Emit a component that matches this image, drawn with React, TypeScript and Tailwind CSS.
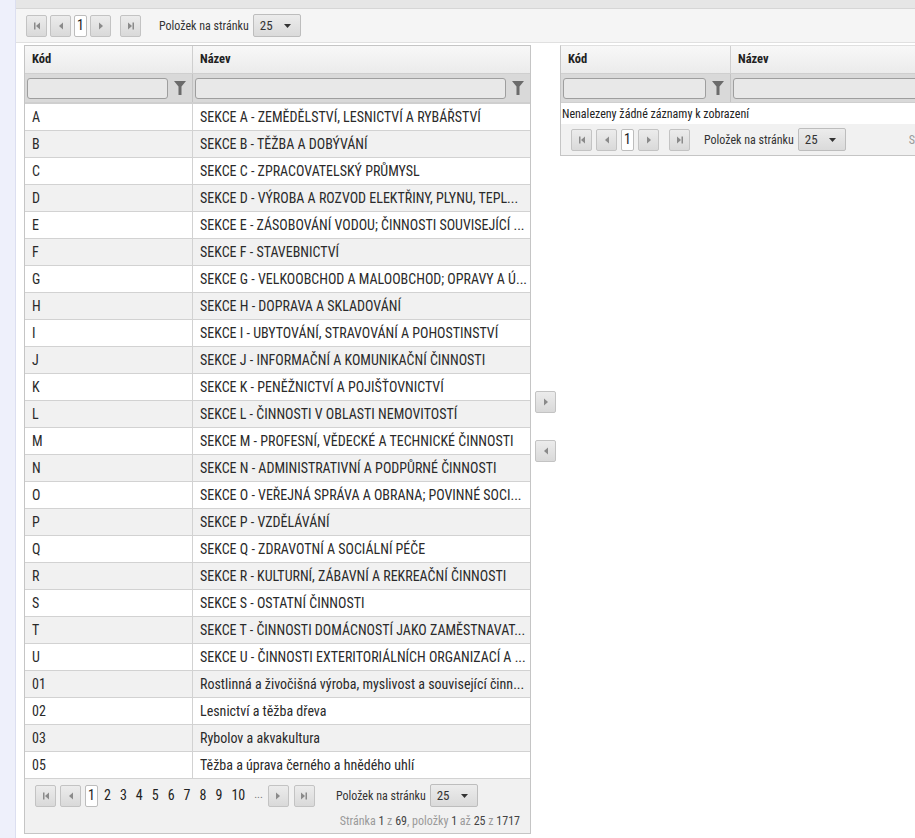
import React from 'react';

const rows: [string, string][] = [
  ['A', 'SEKCE A - ZEMĚDĚLSTVÍ, LESNICTVÍ A RYBÁŘSTVÍ'],
  ['B', 'SEKCE B - TĚŽBA A DOBÝVÁNÍ'],
  ['C', 'SEKCE C - ZPRACOVATELSKÝ PRŮMYSL'],
  ['D', 'SEKCE D - VÝROBA A ROZVOD ELEKTŘINY, PLYNU, TEPL...'],
  ['E', 'SEKCE E - ZÁSOBOVÁNÍ VODOU; ČINNOSTI SOUVISEJÍCÍ ...'],
  ['F', 'SEKCE F - STAVEBNICTVÍ'],
  ['G', 'SEKCE G - VELKOOBCHOD A MALOOBCHOD; OPRAVY A Ú...'],
  ['H', 'SEKCE H - DOPRAVA A SKLADOVÁNÍ'],
  ['I', 'SEKCE I - UBYTOVÁNÍ, STRAVOVÁNÍ A POHOSTINSTVÍ'],
  ['J', 'SEKCE J - INFORMAČNÍ A KOMUNIKAČNÍ ČINNOSTI'],
  ['K', 'SEKCE K - PENĚŽNICTVÍ A POJIŠŤOVNICTVÍ'],
  ['L', 'SEKCE L - ČINNOSTI V OBLASTI NEMOVITOSTÍ'],
  ['M', 'SEKCE M - PROFESNÍ, VĚDECKÉ A TECHNICKÉ ČINNOSTI'],
  ['N', 'SEKCE N - ADMINISTRATIVNÍ A PODPŮRNÉ ČINNOSTI'],
  ['O', 'SEKCE O - VEŘEJNÁ SPRÁVA A OBRANA; POVINNÉ SOCI...'],
  ['P', 'SEKCE P - VZDĚLÁVÁNÍ'],
  ['Q', 'SEKCE Q - ZDRAVOTNÍ A SOCIÁLNÍ PÉČE'],
  ['R', 'SEKCE R - KULTURNÍ, ZÁBAVNÍ A REKREAČNÍ ČINNOSTI'],
  ['S', 'SEKCE S - OSTATNÍ ČINNOSTI'],
  ['T', 'SEKCE T - ČINNOSTI DOMÁCNOSTÍ JAKO ZAMĚSTNAVAT...'],
  ['U', 'SEKCE U - ČINNOSTI EXTERITORIÁLNÍCH ORGANIZACÍ A ...'],
  ['01', 'Rostlinná a živočišná výroba, myslivost a související činn...'],
  ['02', 'Lesnictví a těžba dřeva'],
  ['03', 'Rybolov a akvakultura'],
  ['05', 'Těžba a úprava černého a hnědého uhlí'],
];

const font = { fontFamily: '"Roboto Condensed", "DejaVu Sans Condensed", "Liberation Sans", sans-serif' };

type IconKind = 'first' | 'prev' | 'next' | 'last';

// small triangle glyphs used in the pager buttons
const PagerIcon = ({ kind }: { kind: IconKind }) => (
  <svg width="10" height="10" viewBox="0 0 10 10" className="fill-[#8a8a8a]">
    {kind === 'first' && (
      <>
        <rect x="2" y="1.5" width="1.5" height="7" />
        <path d="M8 1.5 L4 5 L8 8.5 Z" />
      </>
    )}
    {kind === 'prev' && <path d="M7 1.5 L3 5 L7 8.5 Z" />}
    {kind === 'next' && <path d="M3 1.5 L7 5 L3 8.5 Z" />}
    {kind === 'last' && (
      <>
        <path d="M2 1.5 L6 5 L2 8.5 Z" />
        <rect x="6.5" y="1.5" width="1.5" height="7" />
      </>
    )}
  </svg>
);

const PagerButton = ({ kind }: { kind: IconKind }) => (
  <div className="w-[21px] h-[22px] shrink-0 flex items-center justify-center rounded-[2px] border border-[#c3c3c3] bg-gradient-to-b from-[#ececec] to-[#d9d9d9]">
    <PagerIcon kind={kind} />
  </div>
);

const CurrentPage = () => (
  <div className="w-[13px] h-[22px] shrink-0 flex items-center justify-center rounded-[2px] border border-[#bdbdbd] bg-white text-[14px] text-[#222]">
    1
  </div>
);

const PageSize = () => (
  <div className="flex items-center gap-[4px] whitespace-nowrap">
    <span className="text-[12px] text-[#333]">Položek na stránku</span>
    <div className="w-[48px] h-[23px] flex items-center justify-between pl-[6px] pr-[9px] rounded-[2px] border border-[#bdbdbd] bg-gradient-to-b from-[#ececec] to-[#dadada] text-[13px] text-[#333]">
      25
      <svg width="7" height="4" viewBox="0 0 7 4" className="fill-[#333]">
        <path d="M0 0 H7 L3.5 4 Z" />
      </svg>
    </div>
  </div>
);

const FilterCell = ({ w }: { w: string }) => (
  <div className={`${w} h-full flex items-center pl-[2px] border-r border-[#c3c3c3] last:border-r-0`}>
    <div className="flex-1 h-[21px] rounded-[3px] border border-[#9e9e9e] bg-[#e8e8e8]" />
    <div className="w-[24px] flex items-center justify-center">
      <svg width="12" height="14" viewBox="0 0 12 14" className="fill-[#6b6b6b]">
        <path d="M0 0 H12 L7.5 5.5 V14 H4.5 V5.5 Z" />
      </svg>
    </div>
  </div>
);

const HeaderRow = ({ kodW }: { kodW: string }) => (
  <>
    <div className="flex h-[28px] border-b border-[#cfcfcf] bg-gradient-to-b from-[#f8f8f8] to-[#ebebeb] text-[12.5px] font-bold text-[#222]">
      <div className={`${kodW} pl-[7px] flex items-center border-r border-[#cfcfcf]`}>Kód</div>
      <div className="flex-1 pl-[7px] flex items-center">Název</div>
    </div>
    <div className="flex h-[28px] bg-[#d9d9d9]">
      <FilterCell w={kodW} />
      <FilterCell w="flex-1" />
    </div>
  </>
);

export default function App() {
  return (
    <div className="w-[915px] h-[838px] overflow-hidden flex bg-white" style={font}>
      <div className="w-[16px] shrink-0 bg-[#eef0fb] border-r border-[#dcdff0]" />
      <div className="flex-1 flex flex-col min-w-0">
        <div className="h-[9px] bg-[#e6e6e6] border-b border-[#d6d6d6]" />
        <div className="h-[34px] flex items-center pl-[10px] bg-[#f5f5f5] border-b border-[#e0e0e0]">
          <div className="flex items-center gap-[3px]">
            <PagerButton kind="first" />
            <PagerButton kind="prev" />
            <CurrentPage />
            <PagerButton kind="next" />
            <div className="w-[3px]" />
            <PagerButton kind="last" />
          </div>
          <div className="ml-[18px]">
            <PageSize />
          </div>
        </div>

        <div className="flex pl-[8px] pt-[2px]">
          {/* left table */}
          <div className="w-[507px] shrink-0 border border-[#c5c5c5]">
            <HeaderRow kodW="w-[168px]" />
            <div className="border-t-2 border-[#cfcfcf]">
              {rows.map(([k, n], i) => (
                <div
                  key={k}
                  className={`flex h-[27px] border-b border-[#d2d2d2] text-[14px] text-[#2a2a2a] ${i % 2 ? 'bg-[#f1f1f1]' : 'bg-white'}`}
                >
                  <div className="w-[168px] pl-[7px] flex items-center border-r border-[#d2d2d2]">{k}</div>
                  <div className="flex-1 pl-[7px] flex items-center whitespace-nowrap overflow-hidden">{n}</div>
                </div>
              ))}
            </div>
            <div className="h-[54px] bg-[#f1f1f1] pl-[10px] pr-[10px] pt-[5px]">
              <div className="flex items-center">
                <div className="flex items-center gap-[4px]">
                  <PagerButton kind="first" />
                  <PagerButton kind="prev" />
                  <CurrentPage />
                </div>
                <div className="flex items-center gap-[9px] ml-[6px] text-[14px] text-[#222]">
                  {['2', '3', '4', '5', '6', '7', '8', '9', '10'].map((p) => (
                    <span key={p}>{p}</span>
                  ))}
                  <span className="text-[11px] text-[#777]">...</span>
                </div>
                <div className="flex items-center gap-[5px] ml-[5px]">
                  <PagerButton kind="next" />
                  <PagerButton kind="last" />
                </div>
                <div className="ml-[21px]">
                  <PageSize />
                </div>
              </div>
              <div className="text-right text-[12px] text-[#9a9a9a] mt-[5px]">
                Stránka <span className="text-[#444]">1</span> z <span className="text-[#444]">69</span>, položky{' '}
                <span className="text-[#444]">1</span> až <span className="text-[#444]">25</span> z{' '}
                <span className="text-[#444]">1717</span>
              </div>
            </div>
          </div>

          {/* move buttons */}
          <div className="w-[29px] shrink-0 flex flex-col items-center pt-[346px] gap-[27px]">
            <PagerButton kind="next" />
            <PagerButton kind="prev" />
          </div>

          {/* right table */}
          <div className="w-[420px] shrink-0 self-start border border-[#c5c5c5] border-t-[#e0e0e0]">
            <HeaderRow kodW="w-[170px]" />
            <div className="h-[22px] flex items-center pl-[1px] text-[12px] text-[#222] bg-white border-t border-[#cfcfcf]">
              Nenalezeny žádné záznamy k zobrazení
            </div>
            <div className="h-[31px] flex items-center pl-[10px] bg-[#f1f1f1] whitespace-nowrap">
              <div className="flex items-center gap-[4px]">
                <PagerButton kind="first" />
                <PagerButton kind="prev" />
                <CurrentPage />
                <PagerButton kind="next" />
                <div className="w-[2px]" />
                <PagerButton kind="last" />
              </div>
              <div className="ml-[14px]">
                <PageSize />
              </div>
              <span className="ml-[63px] text-[12px] text-[#9a9a9a]">Stránka</span>
            </div>
          </div>
        </div>
      </div>
    </div>
  );
}
